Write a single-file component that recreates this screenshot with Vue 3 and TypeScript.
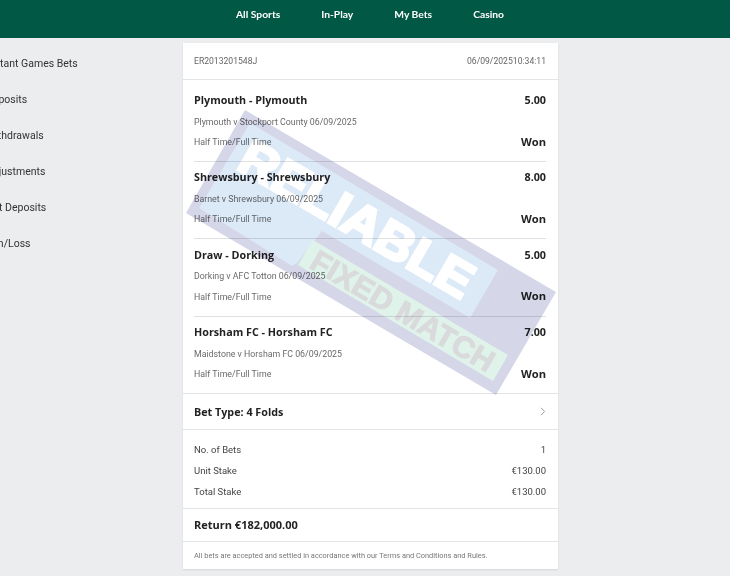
<script setup lang="ts">
interface Selection { pick: string; odds: string; match: string }
const navItems: string[] = ['All Sports', 'In-Play', 'My Bets', 'Casino']
const sideItems: string[] = ['Instant Games Bets', 'Deposits', 'Withdrawals', 'Adjustments', 'Net Deposits', 'Win/Loss']
const selections: Selection[] = [
  { pick: 'Plymouth - Plymouth', odds: '5.00', match: 'Plymouth v Stockport County 06/09/2025' },
  { pick: 'Shrewsbury - Shrewsbury', odds: '8.00', match: 'Barnet v Shrewsbury 06/09/2025' },
  { pick: 'Draw - Dorking', odds: '5.00', match: 'Dorking v AFC Totton 06/09/2025' },
  { pick: 'Horsham FC - Horsham FC', odds: '7.00', match: 'Maidstone v Horsham FC 06/09/2025' }
]
const summary: [string, string][] = [['No. of Bets', '1'], ['Unit Stake', '€130.00'], ['Total Stake', '€130.00']]
</script>

<template>
  <div class="page">
    <header class="top">
      <a v-for="n in navItems" :key="n" class="nav">{{ n }}</a>
    </header>
    <div class="body">
      <aside class="side">
        <div v-for="s in sideItems" :key="s" class="side-item">{{ s }}</div>
      </aside>
      <main class="card">
        <div class="card-head">
          <span>ER2013201548J</span>
          <span class="stamp">06/09/2025 10:34:11</span>
        </div>
        <div class="selections">
          <div v-for="s in selections" :key="s.match" class="sel">
            <div class="row title"><span>{{ s.pick }}</span><span>{{ s.odds }}</span></div>
            <div class="row sub match"><span>{{ s.match }}</span></div>
            <div class="row sub"><span>Half Time/Full Time</span><span class="won">Won</span></div>
          </div>
        </div>
        <div class="bet-type">
          <span>Bet Type: 4 Folds</span>
          <svg width="6" height="9" viewBox="0 0 6 9" fill="none"><path d="M1 .8 4.6 4.5 1 8.2" stroke="#9a9d9f" stroke-width="1"/></svg>
        </div>
        <div class="summary">
          <div v-for="r in summary" :key="r[0]" class="row sum-row"><span>{{ r[0] }}</span><span>{{ r[1] }}</span></div>
        </div>
        <div class="ret">Return €182,000.00</div>
        <div class="legal">All bets are accepted and settled in accordance with our Terms and Conditions and Rules.</div>
      </main>
      <svg class="mark" width="730" height="576" viewBox="0 0 730 576">
        <polygon points="245,110 556,292 496,395 186,213" fill="#d5d6e8"/>
        <polygon points="250,123 498,270 470,318 322,231 297,263 292,266 199,208" fill="#dce9f6"/>
        <polygon points="313,240 508,355 493,381 298,265" fill="#e0f3ea"/>
        <text class="reliable" transform="translate(235,168) rotate(30.2)" textLength="262" lengthAdjust="spacingAndGlyphs">RELIABLE</text>
        <text class="fixed" transform="translate(308,267) rotate(30.6)" textLength="208" lengthAdjust="spacingAndGlyphs">FIXED MATCH</text>
      </svg>
    </div>
  </div>
</template>

<style scoped>
.page { width: 730px; height: 576px; overflow: hidden; background: #ecedef; font-family: Roboto, "Open Sans", sans-serif; color: #222; position: relative; }
.top { height: 38px; background: #005845; display: flex; justify-content: center; gap: 41px; padding: 5px 0 0 10px; box-sizing: border-box; }
.nav { color: #fff; font-family: Lato, sans-serif; font-size: 10.3px; font-weight: 700; line-height: 18px; }
.body { display: flex; align-items: flex-start; padding-top: 5px; }
.side { width: 183px; flex: none; margin-left: -14px; margin-right: 14px; padding-top: 3px; }
.side-item { height: 36px; line-height: 36px; font-size: 10.5px; color: #333; white-space: nowrap; }
.card { width: 375px; flex: none; height: 526px; background: #fff; box-shadow: 0 1px 2px rgba(0,0,0,.1); display: flex; flex-direction: column; }
.card-head { padding: 0 12px 0 11px; display: flex; justify-content: space-between; align-items: center; font-size: 8.6px; color: #666; border-bottom: 1px solid #e3e4e6; flex: none; height: 37px; box-sizing: border-box; }
.stamp { word-spacing: -2px; }
.selections { padding: 4.6px 12px 0 11px; flex: none; }
.sel { height: 77.33px; box-sizing: border-box; border-bottom: 1px solid #dfe0e2; padding-top: 5.5px; }
.sel:last-child { border-bottom: 0; height: 76.7px; }
.row { display: flex; justify-content: space-between; align-items: center; }
.title { height: 20px; font-family: "Open Sans", sans-serif; font-size: 10.75px; font-weight: 700; color: #222; }
.sub { height: 21px; font-size: 8.8px; color: #6a6a6a; }
.match { height: 20px; margin-top: 1.5px; }
.won { font-family: "Open Sans", sans-serif; font-size: 11.2px; font-weight: 700; color: #222; position: relative; top: -1px; }
.bet-type { flex: none; height: 37px; box-sizing: border-box; padding: 0 12px 0 11px; border-top: 1px solid #e3e4e6; border-bottom: 1px solid #e3e4e6; display: flex; justify-content: space-between; align-items: center; font-family: "Open Sans", sans-serif; font-size: 10.75px; font-weight: 700; }
.summary { flex: none; height: 79px; box-sizing: border-box; padding: 9px 12px 0 11px; border-bottom: 1px solid #e3e4e6; }
.sum-row { height: 21px; font-size: 9.5px; color: #444; }
.ret { flex: none; height: 33px; line-height: 32px; padding: 0 11px; font-family: "Open Sans", sans-serif; font-size: 11px; font-weight: 700; border-bottom: 1px solid #e3e4e6; box-sizing: border-box; }
.legal { flex: 1; padding: 0 11px; font-size: 7.4px; color: #777; line-height: 27px; white-space: nowrap; }
.mark { position: absolute; left: 0; top: 0; pointer-events: none; mix-blend-mode: multiply; }
.reliable { font-family: "Liberation Sans", sans-serif; font-weight: 700; font-size: 50px; fill: #fff; stroke: #fff; stroke-width: 3px; }
.fixed { font-family: "Liberation Sans", sans-serif; font-weight: 700; font-size: 30px; fill: #d9dadb; stroke: #d9dadb; stroke-width: 1px; }
</style>
